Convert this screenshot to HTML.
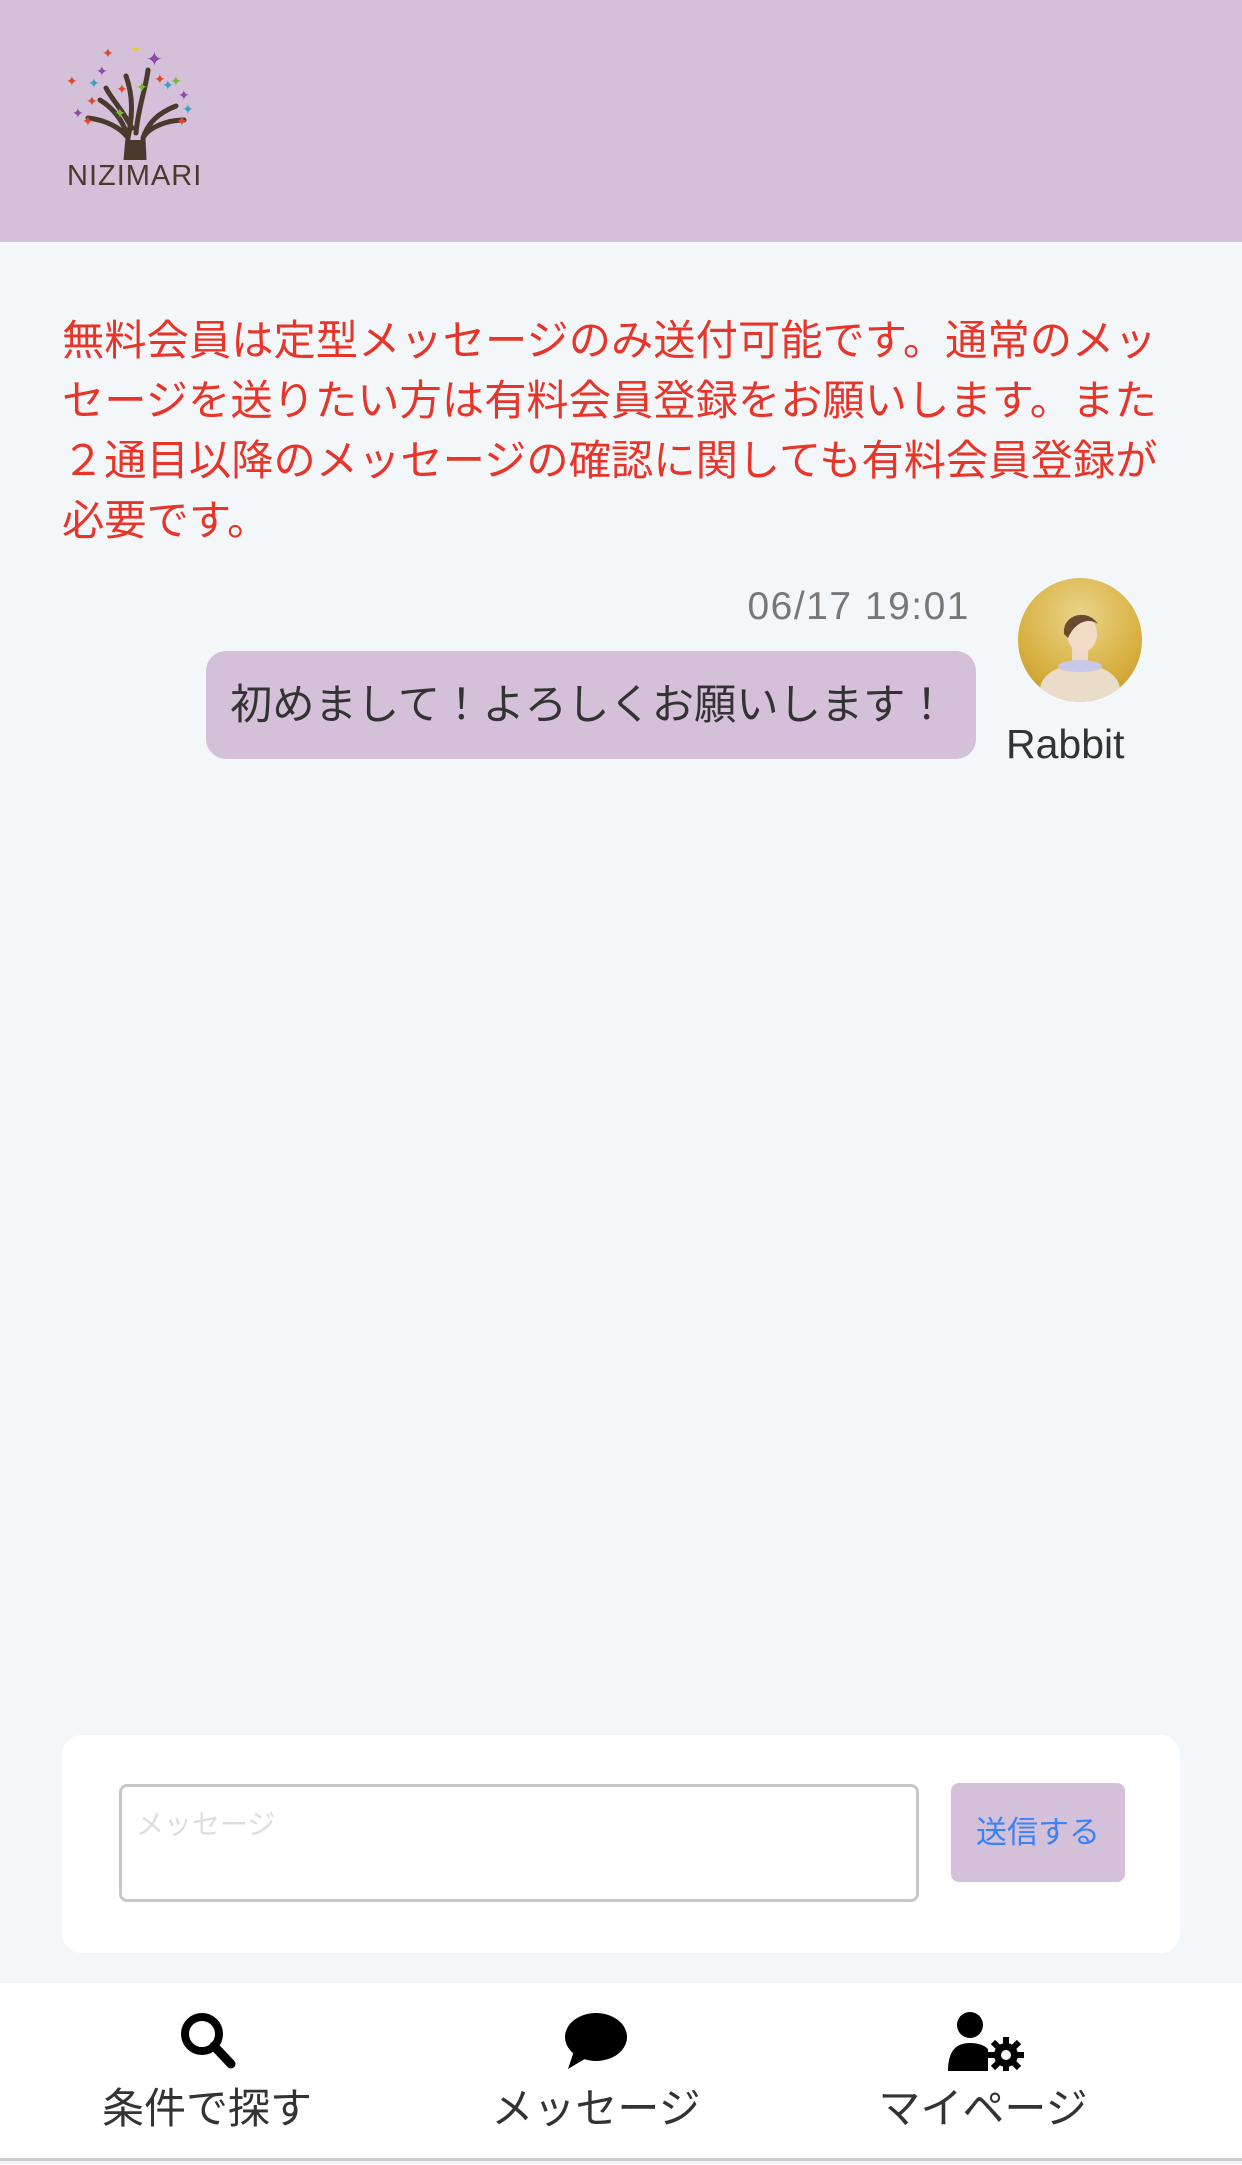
<!DOCTYPE html>
<html><head><meta charset="utf-8"><style>
*{margin:0;padding:0;box-sizing:border-box}
body{width:1242px;height:2165px;background:#f4f7fa;font-family:"Liberation Sans","Noto Sans CJK JP",sans-serif;position:relative;overflow:hidden}
.hdr{position:absolute;left:0;top:0;width:1242px;height:242px;background:#d4c0d8}
.logo-t{position:absolute;left:67px;top:160px;font-family:"Liberation Sans",sans-serif;font-size:29px;color:#4a3a2e;letter-spacing:1px}
.notice{position:absolute;left:62px;top:311px;font-size:42.3px;line-height:60px;color:#e8352a;white-space:nowrap}
.ts{position:absolute;right:272px;top:585px;font-size:39px;color:#777;letter-spacing:1.5px}
.av{position:absolute;left:1018px;top:578px;width:124px;height:124px;border-radius:50%;background:radial-gradient(circle at 50% 30%,#e9d48a,#d8b040 60%,#b8922a);overflow:hidden}
.bubble{position:absolute;left:206px;top:651px;width:770px;height:108px;border-radius:20px;background:#d4c0d8;font-size:42.3px;color:#333;padding-left:24px;line-height:108px;white-space:nowrap}
.name{position:absolute;left:1006px;top:721px;font-size:41px;color:#333}
.card{position:absolute;left:62px;top:1735px;width:1118px;height:218px;background:#fff;border-radius:20px}
.ta{position:absolute;left:119px;top:1784px;width:800px;height:118px;border:3px solid #c8c8c8;border-radius:8px;background:#fff}
.ph{position:absolute;left:14px;top:16px;font-size:28px;color:#ddd}
.btn{position:absolute;left:951px;top:1783px;width:174px;height:99px;border-radius:8px;background:#d4c0d8;color:#3b82f6;font-size:31px;text-align:center;line-height:99px}
.nav{position:absolute;left:0;top:1983px;width:1242px;height:178px;background:#fff;border-bottom:3px solid #ccc}
.ni{position:absolute;top:0;width:300px;text-align:center}
.ni svg{position:absolute;top:28px}
.ni span{position:absolute;top:92px;left:0;width:300px;font-size:42px;color:#333}
</style></head><body>
<div class="hdr">
<svg style="position:absolute;left:66px;top:48px" width="140" height="112" viewBox="0 0 140 112">
<path d="M60 112 L62 90 C55 80 40 72 22 70 M62 90 C58 75 50 62 34 52 M62 90 C66 70 68 50 60 28 M78 112 L77 90 C82 75 92 65 110 58 M77 90 C82 80 100 72 118 72 M70 85 C72 60 80 40 82 22 M66 80 C55 60 45 50 40 40" stroke="#4a3a2e" stroke-width="5" fill="none" stroke-linecap="round"/>
<path d="M58 112 L61 92 L78 92 L80 112Z" fill="#4a3a2e"/>
<g font-size="14" font-family="DejaVu Sans">
<text x="0" y="38" fill="#e04a2a">✦</text><text x="30" y="28" fill="#8a4aa8">✦</text><text x="36" y="10" fill="#e04a2a">✦</text><text x="64" y="6" fill="#e8c83a">✦</text><text x="80" y="18" fill="#8a4aa8" font-size="20">✦</text><text x="96" y="42" fill="#3aa0c8">✦</text><text x="112" y="52" fill="#8a4aa8">✦</text><text x="104" y="38" fill="#7ab83a">✦</text><text x="88" y="36" fill="#e04a2a">✦</text><text x="70" y="44" fill="#7ab83a">✦</text><text x="16" y="78" fill="#e04a2a">✦</text><text x="48" y="70" fill="#7ab83a">✦</text><text x="110" y="78" fill="#e04a2a">✦</text><text x="20" y="58" fill="#e04a2a">✦</text><text x="6" y="70" fill="#8a4aa8">✦</text><text x="116" y="66" fill="#3aa0c8">✦</text><text x="50" y="46" fill="#e04a2a">✦</text><text x="22" y="40" fill="#3aa0c8">✦</text>
</g></svg>
<div class="logo-t">NIZIMARI</div>
</div>
<div class="notice">無料会員は定型メッセージのみ送付可能です。通常のメッ<br>セージを送りたい方は有料会員登録をお願いします。また<br>２通目以降のメッセージの確認に関しても有料会員登録が<br>必要です。</div>
<div class="ts">06/17 19:01</div>
<div class="av"><svg width="124" height="124" viewBox="0 0 124 124"><ellipse cx="62" cy="112" rx="40" ry="26" fill="#e9dcc8"/><rect x="54" y="68" width="16" height="20" fill="#f0d8c4"/><ellipse cx="64" cy="56" rx="15" ry="18" fill="#f2dcc8"/><path d="M46 56 C44 36 70 30 80 46 C72 40 58 42 50 60Z" fill="#6a4a30"/><ellipse cx="62" cy="88" rx="22" ry="6" fill="#c8c8e8"/></svg></div>
<div class="bubble">初めまして！よろしくお願いします！</div>
<div class="name">Rabbit</div>
<div class="card"></div>
<div class="ta"><div class="ph">メッセージ</div></div>
<div class="btn">送信する</div>
<div class="nav">
<div class="ni" style="left:57px"><svg style="left:122px" width="58" height="58" viewBox="0 0 58 58"><circle cx="23" cy="23" r="17" stroke="#000" stroke-width="8" fill="none"/><path d="M35 35 L52 53" stroke="#000" stroke-width="9" stroke-linecap="round"/></svg><span>条件で探す</span></div>
<div class="ni" style="left:446px"><svg style="left:118px" width="64" height="60" viewBox="0 0 64 60"><ellipse cx="32" cy="26" rx="31" ry="24" fill="#000"/><path d="M10 40 L4 58 L24 46Z" fill="#000"/></svg><span>メッセージ</span></div>
<div class="ni" style="left:833px"><svg style="left:115px" width="78" height="60" viewBox="0 0 78 60"><circle cx="22" cy="14" r="13" fill="#000"/><path d="M0 60 C0 40 8 32 22 32 C30 32 36 34 40 38 L40 60Z" fill="#000"/><circle cx="58" cy="44" r="12" fill="#000"/><g stroke="#000" stroke-width="6"><path d="M58 26 V62 M40 44 H76 M45 31 L71 57 M71 31 L45 57"/></g><circle cx="58" cy="44" r="5" fill="#fff"/></svg><span>マイページ</span></div>
</div>
</body></html>
